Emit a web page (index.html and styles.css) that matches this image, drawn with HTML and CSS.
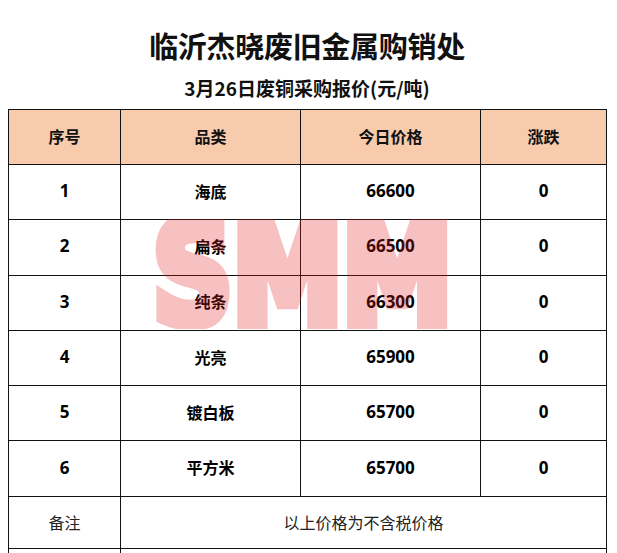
FILE: index.html
```html
<!DOCTYPE html>
<html lang="zh">
<head>
<meta charset="utf-8">
<title>临沂杰晓废旧金属购销处</title>
<link rel="stylesheet" href="styles.css">
</head>
<body>
<div class="page">
  <h1 class="title">临沂杰晓废旧金属购销处</h1>
  <h2 class="subtitle">3月26日废铜采购报价(元/吨)</h2>
  <div class="table-wrap">
    <table class="price">
      <colgroup>
        <col class="c1"><col class="c2"><col class="c3"><col class="c4">
      </colgroup>
      <thead>
        <tr class="head"><th>序号</th><th>品类</th><th>今日价格</th><th>涨跌</th></tr>
      </thead>
      <tbody>
        <tr class="row"><td class="num">1</td><td class="cn">海底</td><td class="num">66600</td><td class="num">0</td></tr>
        <tr class="row"><td class="num">2</td><td class="cn">扁条</td><td class="num">66500</td><td class="num">0</td></tr>
        <tr class="row"><td class="num">3</td><td class="cn">纯条</td><td class="num">66300</td><td class="num">0</td></tr>
        <tr class="row"><td class="num">4</td><td class="cn">光亮</td><td class="num">65900</td><td class="num">0</td></tr>
        <tr class="row"><td class="num">5</td><td class="cn">镀白板</td><td class="num">65700</td><td class="num">0</td></tr>
        <tr class="row"><td class="num">6</td><td class="cn">平方米</td><td class="num">65700</td><td class="num">0</td></tr>
        <tr class="note"><td class="plain">备注</td><td class="plain" colspan="3">以上价格为不含税价格</td></tr>
        <tr class="extra"><td></td><td colspan="3"></td></tr>
      </tbody>
    </table>
    <svg class="watermark" viewBox="0 0 311 110" width="311" height="110" aria-hidden="true">
      <text x="6" y="104" textLength="299" lengthAdjust="spacingAndGlyphs" class="wm-text">SMM</text>
    </svg>
  </div>
</div>
</body>
</html>
```

FILE: styles.css
```css
html, body {
  margin: 0;
  padding: 0;
  background: #ffffff;
}

body {
  font-family: "Noto Sans CJK SC", "Noto Sans", sans-serif;
  color: #000;
  overflow: hidden;
}

.page {
  width: 598px;
  padding: 25px 11px 0 8px;
}

.title {
  margin: 0;
  height: 40px;
  line-height: 40px;
  font-size: 29px;
  font-weight: 700;
  text-align: center;
  letter-spacing: -0.3px;
  color: #111;
}

.subtitle {
  margin: 10px 0 0;
  height: 26px;
  line-height: 26px;
  font-size: 19px;
  font-weight: 700;
  text-align: center;
  color: #111;
}

.table-wrap {
  position: relative;
  margin-top: 8px;
}

.price {
  width: 598px;
  border-collapse: collapse;
  table-layout: fixed;
}

.c1 { width: 112px; }
.c2 { width: 180px; }
.c3 { width: 180px; }
.c4 { width: 126px; }

.price th,
.price td {
  border: 1px solid #111;
  padding: 0;
  text-align: center;
  vertical-align: middle;
}

.head {
  height: 55px;
}

.head th {
  background: #f8cbad;
  font-size: 16px;
  font-weight: 700;
  color: #111;
  padding-bottom: 2px;
}

.row {
  height: 55.3px;
}

.row td {
  padding-bottom: 3px;
}

.num {
  font-family: "Open Sans", "Noto Sans CJK SC", sans-serif;
  font-size: 17px;
  font-weight: 700;
}

.cn {
  font-size: 16px;
  font-weight: 700;
}

.note {
  height: 52px;
}

.plain {
  font-size: 16px;
  font-weight: 400;
  color: #222;
}

.extra {
  height: 40px;
}

.watermark {
  position: absolute;
  left: 139px;
  top: 110px;
  opacity: 0.27;
  pointer-events: none;
}

.wm-text {
  font-family: "DejaVu Sans", sans-serif;
  font-stretch: condensed;
  font-weight: 700;
  font-size: 140px;
  fill: #e81e1e;
  stroke: #e81e1e;
  stroke-width: 12px;
  stroke-linejoin: miter;
}
```
